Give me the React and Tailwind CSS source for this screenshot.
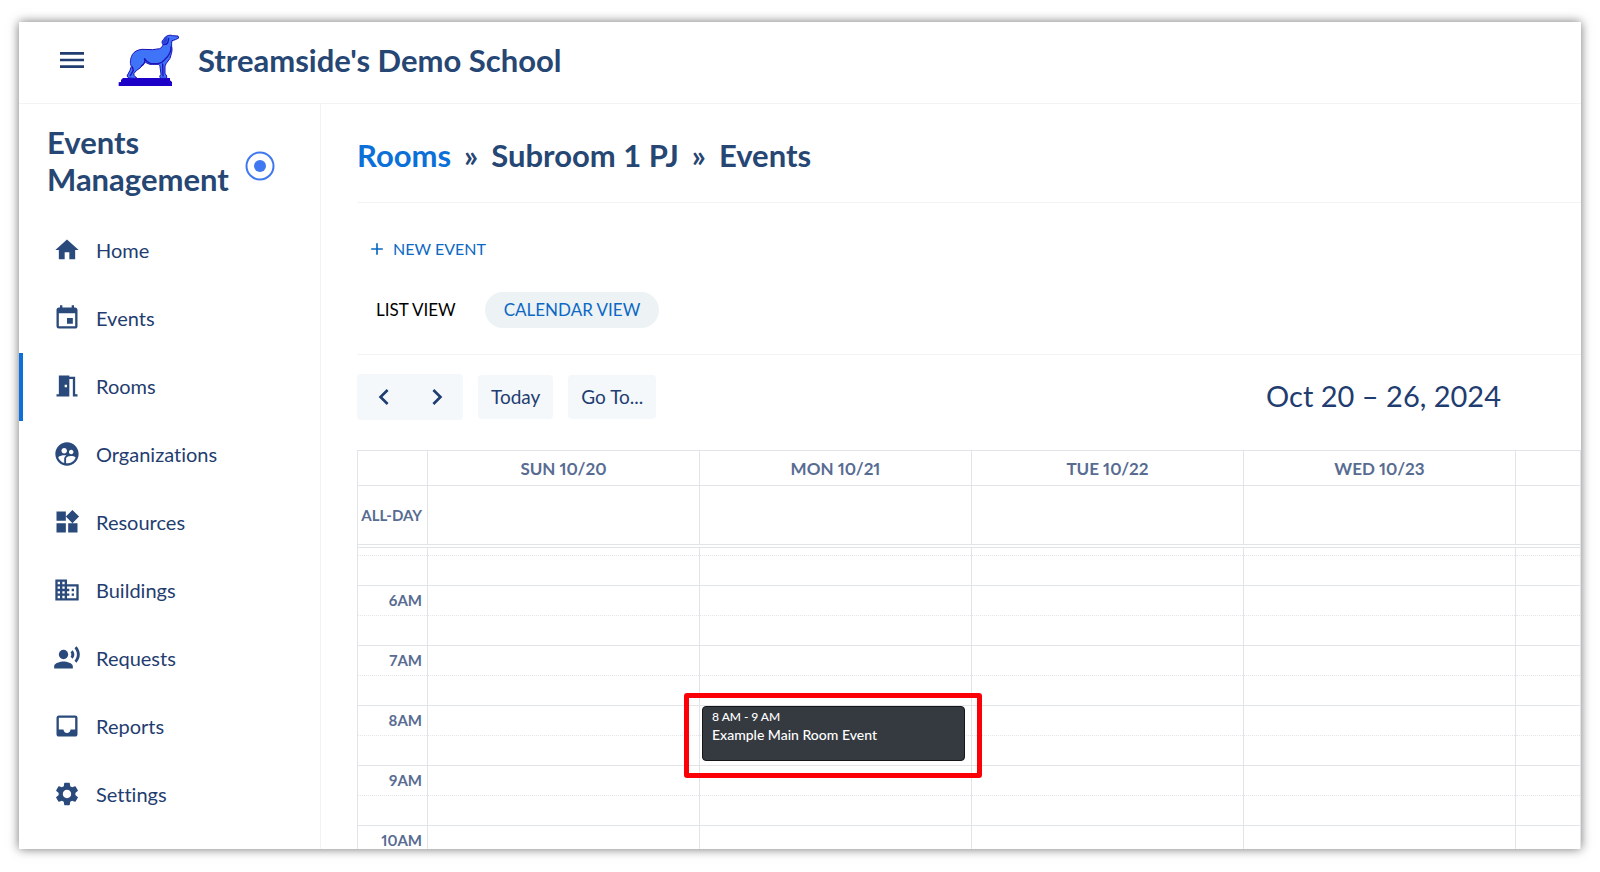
import {
  MdAdd,
  MdChevronLeft,
  MdChevronRight,
  MdDomain,
  MdEvent,
  MdHome,
  MdInbox,
  MdMeetingRoom,
  MdMenu,
  MdRecordVoiceOver,
  MdSettings,
  MdSupervisedUserCircle,
  MdWidgets,
} from "react-icons/md";

const navItems = [
  { label: "Home", icon: MdHome },
  { label: "Events", icon: MdEvent },
  { label: "Rooms", icon: MdMeetingRoom, active: true },
  { label: "Organizations", icon: MdSupervisedUserCircle },
  { label: "Resources", icon: MdWidgets },
  { label: "Buildings", icon: MdDomain },
  { label: "Requests", icon: MdRecordVoiceOver },
  { label: "Reports", icon: MdInbox },
  { label: "Settings", icon: MdSettings },
];

const days = ["SUN 10/20", "MON 10/21", "TUE 10/22", "WED 10/23"];
const hours = ["6AM", "7AM", "8AM", "9AM", "10AM"];

const event = { day: "MON 10/21", hour: "8AM", time: "8 AM - 9 AM", title: "Example Main Room Event" };

export default function App() {
  return (
    <div className="h-screen bg-white px-[19px] pt-[22px] pb-[23px] font-['Lato',sans-serif] text-[#1f3d70] [font-variant-ligatures:none]">
      <div className="flex h-full flex-col overflow-hidden bg-white shadow-[0_0_10px_rgba(0,0,0,0.55)]">
        <Header />
        <div className="flex min-h-0 flex-1">
          <Sidebar />
          <main className="min-w-0 flex-1 overflow-hidden pl-9">
            <Breadcrumb />
            <Views />
            <Toolbar />
            <Calendar />
          </main>
        </div>
      </div>
    </div>
  );
}

function Header() {
  return (
    <header className="flex h-[82px] shrink-0 items-center border-b border-[#f1f3f5] pb-1.5 pl-[37px]">
      <button aria-label="Menu" className="h-8 w-8">
        <MdMenu size={32} />
      </button>
      <DogLogo />
      <h1 className="ml-[18px] text-[31px] leading-9 font-bold text-[#264673]">Streamside's Demo School</h1>
    </header>
  );
}

function Sidebar() {
  return (
    <aside className="w-[302px] shrink-0 border-r border-[#f1f3f5]">
      <div className="flex h-[113px] items-center gap-4 pl-7">
        <h2 className="text-[31px] leading-[37px] font-bold text-[#264673]">
          Events
          <br />
          Management
        </h2>
        <button aria-label="Pin menu" className="pt-2.5">
          <svg width="30" height="30" viewBox="0 0 30 30">
            <circle cx="15" cy="15" r="13.5" fill="none" stroke="#3f78f0" strokeWidth="2" />
            <circle cx="15" cy="15" r="6" fill="#3f78f0" />
          </svg>
        </button>
      </div>
      <nav>
        {navItems.map((item) => (
          <NavItem key={item.label} {...item} />
        ))}
      </nav>
    </aside>
  );
}

function NavItem({ label, icon: Icon, active }) {
  return (
    <a
      href="#"
      className={
        active
          ? "flex h-[68px] items-center gap-[15px] border-l-4 border-[#0b70d8] pb-0.5 pl-[30px] text-[20px]"
          : "flex h-[68px] items-center gap-[15px] border-l-4 border-transparent pb-0.5 pl-[30px] text-[20px]"
      }
    >
      <Icon size={28} className="text-[#2a4a7c]" />
      {label}
    </a>
  );
}

function Breadcrumb() {
  return (
    <div className="flex h-[99px] items-center border-b border-[#f1f3f5] pt-1 text-[31px] font-bold text-[#264673]">
      <a href="#" className="text-[#0b70d8]">
        Rooms
      </a>
      <span className="mx-[13px]">»</span>
      <span>Subroom 1 PJ</span>
      <span className="mx-[13px]">»</span>
      <span>Events</span>
    </div>
  );
}

function Views() {
  return (
    <div className="h-[152px] border-b border-[#f1f3f5] pt-8">
      <button className="ml-[10px] flex h-7 items-center gap-1.5 text-[16px] text-[#0b68c4]">
        <MdAdd size={20} />
        NEW EVENT
      </button>
      <div className="mt-[29px] flex h-9 items-center gap-[10px] text-[17px]">
        <button className="h-9 rounded-full px-[19px] text-black">LIST VIEW</button>
        <button className="h-9 rounded-full bg-[#edf2f5] px-[19px] text-[#0b68c4]">CALENDAR VIEW</button>
      </div>
    </div>
  );
}

function Toolbar() {
  return (
    <div className="flex h-[95px] items-start justify-between pt-[19px] pr-20">
      <div className="flex items-center gap-[15px] text-[19px]">
        <div className="flex h-[46px] rounded bg-[#f4f8fb]">
          <button aria-label="Previous week" className="flex w-[53px] items-center justify-center">
            <MdChevronLeft size={32} />
          </button>
          <button aria-label="Next week" className="flex w-[53px] items-center justify-center">
            <MdChevronRight size={32} />
          </button>
        </div>
        <button className="h-11 rounded bg-[#f4f8fb] px-[13px]">Today</button>
        <button className="h-11 rounded bg-[#f4f8fb] px-[13px]">Go To...</button>
      </div>
      <p className="text-[29px] leading-[44px]">Oct 20 – 26, 2024</p>
    </div>
  );
}

// The last column takes what is left of the window width.
function Calendar() {
  return (
    <table className="w-full table-fixed border-collapse border border-[#e2e5e8] text-[#586c92] proportional-nums">
      <colgroup>
        <col className="w-[70px]" />
        {days.map((day) => (
          <col key={day} className="w-[272px]" />
        ))}
        <col />
      </colgroup>
      <thead>
        <tr className="h-[35px]">
          <td className="border border-[#e2e5e8]" />
          {days.map((day) => (
            <th key={day} className="border border-[#e2e5e8] p-0 pt-0.5 text-[17px] leading-6 font-bold">
              {day}
            </th>
          ))}
          <td className="border border-[#e2e5e8]" />
        </tr>
      </thead>
      <tbody>
        <tr className="h-[59px]">
          <th className="border border-[#e2e5e8] p-0 pr-[5px] text-right text-[15px] leading-6 font-bold whitespace-nowrap">
            ALL-DAY
          </th>
          {days.map((day) => (
            <td key={day} className="border border-[#e2e5e8]" />
          ))}
          <td className="border border-[#e2e5e8]" />
        </tr>
        <tr className="h-[3px]">
          <td colSpan={6} className="border border-[#e2e5e8] p-0" />
        </tr>
        <tr className="h-2">
          <td className="border-x border-[#e2e5e8] p-0" />
          {days.map((day) => (
            <td key={day} className="border-x border-[#e2e5e8] p-0" />
          ))}
          <td className="border-x border-[#e2e5e8] p-0" />
        </tr>
        <HalfHourRow />
        {hours.map((hour) => (
          <HourRows key={hour} hour={hour} />
        ))}
      </tbody>
    </table>
  );
}

function HourRows({ hour }) {
  return (
    <>
      <tr className="h-[30px]">
        <th className="border-x border-t border-[#e2e5e8] p-0 pr-[5px] pb-0.5 text-right text-[15px] leading-6 font-bold">
          {hour}
        </th>
        {days.map((day) => (
          <td key={day} className="relative border-x border-t border-[#e2e5e8] p-0">
            {event.day === day && event.hour === hour && <EventCard />}
          </td>
        ))}
        <td className="border-x border-t border-[#e2e5e8] p-0" />
      </tr>
      <HalfHourRow />
    </>
  );
}

function HalfHourRow() {
  return (
    <tr className="h-[30px]">
      <td className="border-x border-t border-[#e2e5e8] p-0 [border-top-style:dotted]" />
      {days.map((day) => (
        <td key={day} className="border-x border-t border-[#e2e5e8] p-0 [border-top-style:dotted]" />
      ))}
      <td className="border-x border-t border-[#e2e5e8] p-0 [border-top-style:dotted]" />
    </tr>
  );
}

function EventCard() {
  return (
    <>
      <a
        href="#"
        className="absolute top-0 right-[6px] left-[2px] z-10 h-[55px] rounded border border-[#14171a] bg-[#343a40] px-[9px] text-white"
      >
        <span className="block pt-[2px] text-[12px] leading-4 font-medium">{event.time}</span>
        <span className="block text-[14px] leading-5 font-medium">{event.title}</span>
      </a>
      <div className="pointer-events-none absolute -top-[13px] -right-[11px] -left-4 z-20 h-[85px] rounded-[3px] border-5 border-[#fb0007]" />
    </>
  );
}

function DogLogo() {
  return (
    <svg className="ml-[30px] h-[54px] w-[62px] shrink-0" viewBox="22 22 186 162" aria-label="School logo">
      <path
        d="M24 181V170L31 169V163L37 157H178V164L184 169V181Z"
        fill="#1d00c8"
      />
      <path
        d="M70 158L54 157L49 151L58 134L62 122C57 112 59 99 65 87C71 77 80 73 94 71L126 72L147 69C153 66 156 62 157 57C153 52 153 46 158 42L164 34C170 29 179 27 186 30L202 31L204 37L194 42L184 45C183 52 182 57 183 63C185 70 184 77 182 84L178 98L167 113L163 121V143L168 151V158H150L147 152L151 146L148 123C147 118 146 116 142 116L117 116L104 110C98 114 94 122 88 127L77 135L70 143L70 149L78 157Z"
        fill="#3f74f8"
        stroke="#1d12b8"
        strokeWidth="3"
        strokeLinejoin="round"
      />
      <path
        d="M158 56C164 57 170 54 172 48L174 38M181 63C182 77 174 91 163 101C156 109 151 113 142 114L120 114C111 111 106 106 101 98C105 106 102 114 92 121M156 115L157 151M65 124L68 134L59 150"
        fill="none"
        stroke="#1d12b8"
        strokeWidth="4"
        strokeLinecap="round"
      />
      <path d="M158 45L165 35L171 34L168 49L161 54L155 51Z" fill="#2743d6" />
    </svg>
  );
}
